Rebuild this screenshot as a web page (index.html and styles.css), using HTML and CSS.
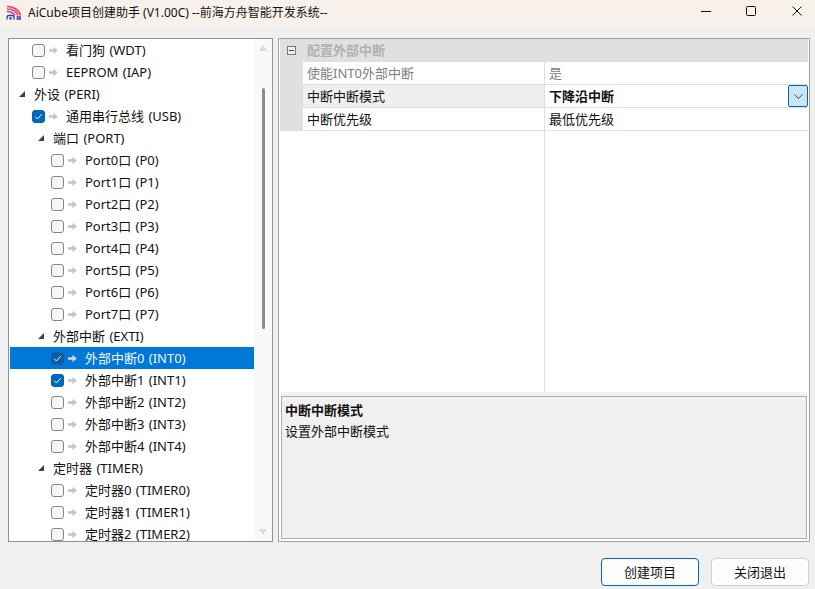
FILE: index.html
```html
<!DOCTYPE html>
<html lang="zh">
<head>
<meta charset="utf-8">
<title>AiCube</title>
<link rel="stylesheet" href="styles.css">
</head>
<body>
<svg width="0" height="0" class="defs">
  <symbol id="arrow" viewBox="0 0 9 9"><path d="M0 3.200h4.500V.8L8.800 4.500 4.500 8.200V5.800H0z" fill="currentColor"/></symbol>
  <symbol id="check" viewBox="0 0 13 13"><path d="M3.200 6.800l2.200 2.200 4.400-4.800" fill="none" stroke="#fff" stroke-width="1"/></symbol>
</svg>
<div class="window">
  <header class="titlebar">
    <svg class="logo" viewBox="0 0 16 16" width="16" height="16">
      <path d="M1 1.500c6 0 12 3 13.500 9M1 4c5 0 9.500 2.500 11 6.500M1 6.500c3.500 0 6.500 1.500 8 4" fill="none" stroke="#e8436a" stroke-width="1.700"/>
      <path d="M1 14.500v-2c0-1.500 1-2 2-2h3c1.500 0 2 1 2 2v2M4 14.500v-1.500h1v1.500M10.500 12h4.500M10.500 14h4.500" fill="none" stroke="#1d3fc4" stroke-width="1.300"/>
    </svg>
    <span class="title">AiCube项目创建助手 (V1.00C) --前海方舟智能开发系统--</span>
    <div class="controls">
      <svg class="ctl" viewBox="0 0 46 27" width="46" height="27"><path d="M24 11.500h10" stroke="#111" fill="none"/></svg>
      <svg class="ctl" viewBox="0 0 46 27" width="46" height="27"><rect x="23.500" y="6.500" width="9" height="9" rx="1" stroke="#111" fill="none"/></svg>
      <svg class="ctl" viewBox="0 0 46 27" width="46" height="27"><path d="M23.500 6.500l9 9M32.500 6.500l-9 9" stroke="#111" fill="none"/></svg>
    </div>
  </header>
  <main class="main">
    <section class="tree">
      <div class="rows">
        <div class="row l1"><span class="cb"></span><svg class="ar"><use href="#arrow"/></svg><span class="txt">看门狗 (WDT)</span></div>
        <div class="row l1"><span class="cb"></span><svg class="ar"><use href="#arrow"/></svg><span class="txt">EEPROM (IAP)</span></div>
        <div class="row g0"><span class="tri"></span><span class="txt">外设 (PERI)</span></div>
        <div class="row l1"><span class="cb on"><svg><use href="#check"/></svg></span><svg class="ar"><use href="#arrow"/></svg><span class="txt">通用串行总线 (USB)</span></div>
        <div class="row g1"><span class="tri"></span><span class="txt">端口 (PORT)</span></div>
        <div class="row l2"><span class="cb"></span><svg class="ar"><use href="#arrow"/></svg><span class="txt">Port0口 (P0)</span></div>
        <div class="row l2"><span class="cb"></span><svg class="ar"><use href="#arrow"/></svg><span class="txt">Port1口 (P1)</span></div>
        <div class="row l2"><span class="cb"></span><svg class="ar"><use href="#arrow"/></svg><span class="txt">Port2口 (P2)</span></div>
        <div class="row l2"><span class="cb"></span><svg class="ar"><use href="#arrow"/></svg><span class="txt">Port3口 (P3)</span></div>
        <div class="row l2"><span class="cb"></span><svg class="ar"><use href="#arrow"/></svg><span class="txt">Port4口 (P4)</span></div>
        <div class="row l2"><span class="cb"></span><svg class="ar"><use href="#arrow"/></svg><span class="txt">Port5口 (P5)</span></div>
        <div class="row l2"><span class="cb"></span><svg class="ar"><use href="#arrow"/></svg><span class="txt">Port6口 (P6)</span></div>
        <div class="row l2"><span class="cb"></span><svg class="ar"><use href="#arrow"/></svg><span class="txt">Port7口 (P7)</span></div>
        <div class="row g1"><span class="tri"></span><span class="txt">外部中断 (EXTI)</span></div>
        <div class="row l2 sel"><span class="cb on"><svg><use href="#check"/></svg></span><svg class="ar"><use href="#arrow"/></svg><span class="txt">外部中断0 (INT0)</span></div>
        <div class="row l2"><span class="cb on"><svg><use href="#check"/></svg></span><svg class="ar"><use href="#arrow"/></svg><span class="txt">外部中断1 (INT1)</span></div>
        <div class="row l2"><span class="cb"></span><svg class="ar"><use href="#arrow"/></svg><span class="txt">外部中断2 (INT2)</span></div>
        <div class="row l2"><span class="cb"></span><svg class="ar"><use href="#arrow"/></svg><span class="txt">外部中断3 (INT3)</span></div>
        <div class="row l2"><span class="cb"></span><svg class="ar"><use href="#arrow"/></svg><span class="txt">外部中断4 (INT4)</span></div>
        <div class="row g1"><span class="tri"></span><span class="txt">定时器 (TIMER)</span></div>
        <div class="row l2"><span class="cb"></span><svg class="ar"><use href="#arrow"/></svg><span class="txt">定时器0 (TIMER0)</span></div>
        <div class="row l2"><span class="cb"></span><svg class="ar"><use href="#arrow"/></svg><span class="txt">定时器1 (TIMER1)</span></div>
        <div class="row l2"><span class="cb"></span><svg class="ar"><use href="#arrow"/></svg><span class="txt">定时器2 (TIMER2)</span></div>
      </div>
      <div class="scrollbar">
        <span class="sb-up"></span>
        <span class="thumb"></span>
        <span class="sb-down"></span>
      </div>
    </section>
    <section class="props">
      <div class="grid-area">
        <div class="group"><span class="minus"></span><span class="group-text">配置外部中断</span></div>
        <div class="prop disabled"><span class="margin"></span><span class="name">使能INT0外部中断</span><span class="val">是</span></div>
        <div class="prop current"><span class="margin"></span><span class="name">中断中断模式</span><span class="val bold">下降沿中断<span class="drop"><svg viewBox="0 0 19 21" width="19" height="21"><path d="M5.500 8.500l4 4 4-4" fill="none" stroke="#444"/></svg></span></span></div>
        <div class="prop"><span class="margin"></span><span class="name">中断优先级</span><span class="val">最低优先级</span></div>
        <div class="rest"><span class="rest-l"></span><span class="rest-r"></span></div>
      </div>
      <div class="splitter"></div>
      <div class="help">
        <div class="help-title">中断中断模式</div>
        <div class="help-text">设置外部中断模式</div>
      </div>
    </section>
  </main>
  <footer class="footer">
    <button class="btn primary">创建项目</button>
    <button class="btn">关闭退出</button>
  </footer>
</div>
</body>
</html>
```
FILE: styles.css
```css
* { box-sizing: border-box; }
html, body { margin: 0; padding: 0; }
body {
  width: 815px; height: 589px; overflow: hidden;
  background: #f0f0f0; color: #111;
  font: 13px/22px "Noto Sans", "Noto Sans CJK SC", sans-serif;
}
.defs { position: absolute; }
.window { display: flex; flex-direction: column; height: 589px; }
.titlebar {
  height: 27px; background: #f8f1eb; display: flex; align-items: center;
  padding-left: 6px; flex: none;
}
.logo { flex: none; margin-top: -1px; }
.title { margin-left: 6px; font-size: 12px; line-height: 24px; margin-top: -1px; white-space: nowrap; }
.controls { margin-left: auto; display: flex; }
.ctl { display: block; }
.main { display: flex; flex: none; height: 504px; margin-top: 11px; padding: 0 5px 0 8px; gap: 5px; }
.tree {
  width: 265px; height: 504px; border: 1px solid #8d9199; background: #fff;
  display: flex; overflow: hidden; flex: none;
}
.rows { flex: 1; min-width: 0; padding-left: 1px; overflow: hidden; }
.row { height: 22px; display: flex; align-items: center; white-space: nowrap; }
.txt { word-spacing: 1px; }
.l1 { padding-left: 22px; }
.l2 { padding-left: 41px; }
.g0 { padding-left: 9px; }
.g1 { padding-left: 28px; }
.sel { background: #0078d7; color: #fff; }
.sel .txt { opacity: .95; }
.cb {
  width: 13px; height: 13px; flex: none; border: 1px solid #868686; border-radius: 3px;
  background: #f6f6f6; display: block;
}
.cb svg { display: block; width: 13px; height: 13px; margin: -1px; }
.cb.on { background: #0067c0; border-color: #0067c0; }
.sel .cb.on { border-color: #1a5fa8; background: #0d5cab; }
.ar { width: 9px; height: 9px; margin: 0 8px 0 4px; color: #c4c4c4; flex: none; }
.sel .ar { color: #d6d6d6; }
.tri {
  width: 0; height: 0; flex: none; margin-right: 9px;
  border-style: solid; border-width: 0 0 6px 6px;
  border-color: transparent transparent #404040 transparent;
}
.scrollbar { width: 18px; background: #f9f9f9; flex: none; position: relative; }
.sb-up, .sb-down {
  position: absolute; left: 5px; width: 0; height: 0;
  border-left: 4.500px solid transparent; border-right: 4.500px solid transparent;
}
.sb-up { top: 6px; border-bottom: 6px solid #dcdcdc; }
.sb-down { bottom: 6px; border-top: 6px solid #dcdcdc; }
.thumb {
  position: absolute; left: 8px; top: 49px; width: 3px; height: 241px;
  background: #8c8c8c; border-radius: 2px;
}
.props {
  width: 532px; height: 504px; border: 1px solid #a0a0a0; background: #fff;
  display: flex; flex-direction: column; padding: 0 1px 2px; flex: none;
}
.grid-area { height: 353px; display: flex; flex-direction: column; flex: none; }
.group {
  height: 23px; background: #e0e0e0; color: #b0b0b0; font-weight: 700;
  display: flex; align-items: center; padding-left: 7px; flex: none;
}
.group-text { padding-bottom: 2px; }
.minus {
  width: 9px; height: 9px; border: 1px solid #777; margin-right: 11px; position: relative;
  background: #eee; flex: none;
}
.minus::after { content: ""; position: absolute; left: 1px; right: 1px; top: 3px; height: 1px; background: #444; }
.prop { height: 23px; display: flex; flex: none; }
.margin { width: 23px; background: #e0e0e0; flex: none; }
.name {
  width: 242px; flex: none; padding-left: 4px; border-bottom: 1px solid #e0e0e0;
  border-right: 1px solid #e0e0e0; line-height: 22px;
}
.val {
  flex: 1; padding-left: 4px; border-bottom: 1px solid #e0e0e0; line-height: 22px;
  display: flex; position: relative;
}
.bold { font-weight: 700; }
.disabled .name, .disabled .val { color: #808080; }
.current .name { background: #efefef; }
.drop {
  position: absolute; right: 0; top: 0; width: 20px; height: 22px;
  background: #cce4f7; border: 1px solid #0067c0; border-radius: 2px;
}
.drop svg { display: block; }
.rest { flex: 1; display: flex; }
.rest-l { width: 265px; border-right: 1px solid #e0e0e0; }
.rest-r { flex: 1; }
.splitter { height: 4px; margin: 0 1px; background: #f0f0f0; flex: none; }
.help {
  margin: 0 1px; flex: 1; border: 1px solid #b0b0b0; background: #f0f0f0;
  padding: 3px 3px; line-height: 21px;
}
.help-title { font-weight: 700; }
.footer { display: flex; justify-content: flex-end; gap: 12px; padding: 16px 6px 0 0; }
.btn {
  width: 98px; height: 28px; border: 1px solid #d0d0d0; border-radius: 4px; background: #fdfdfd;
  font: inherit; color: #111; padding: 0;
}
.primary { border-color: #0067c0; }
```
